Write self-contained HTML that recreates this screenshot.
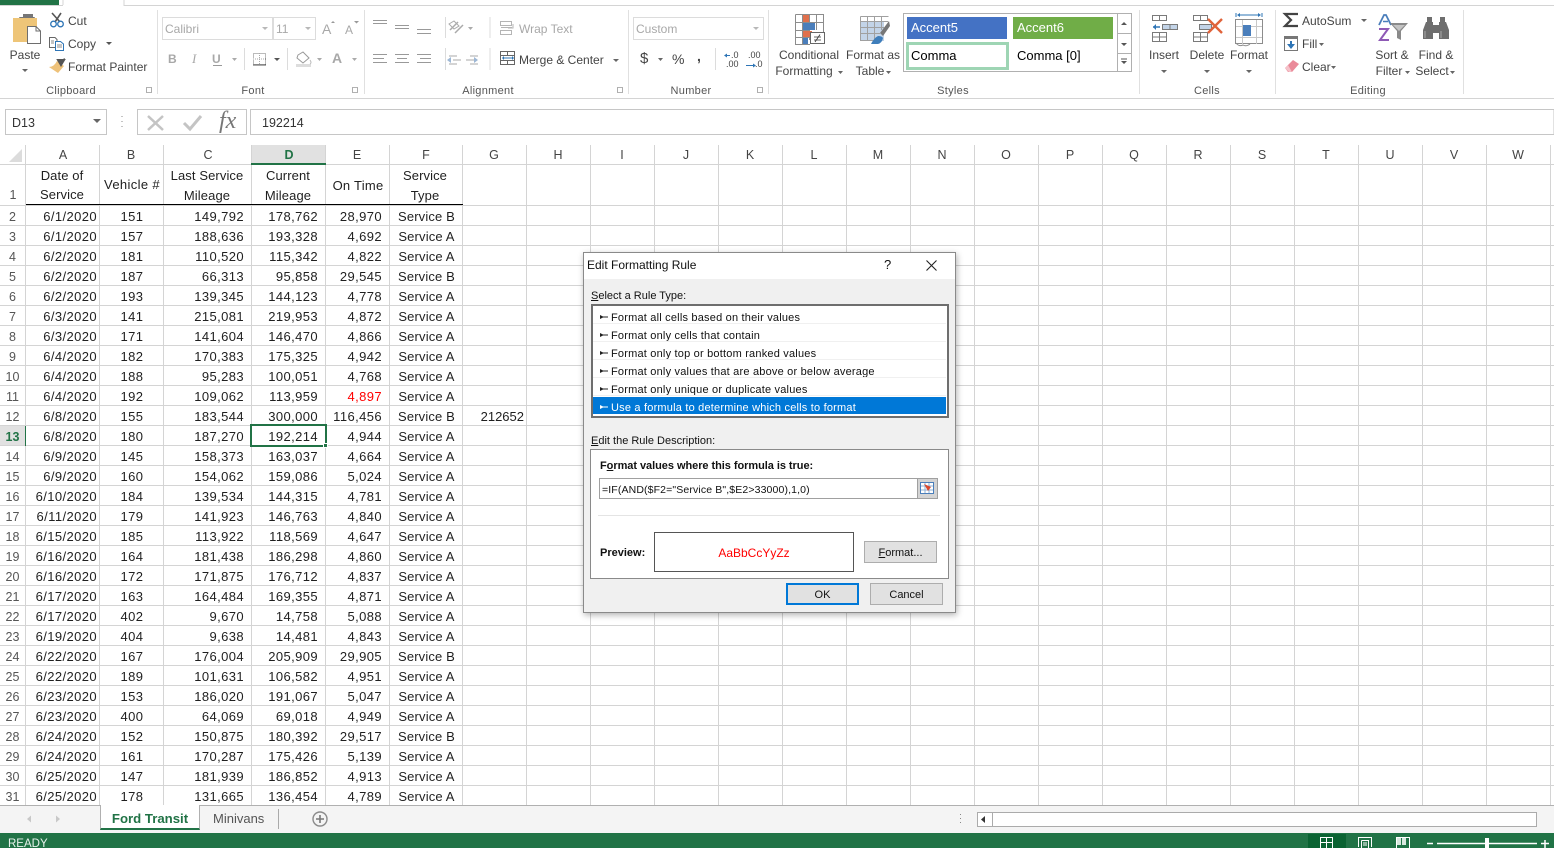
<!DOCTYPE html>
<html><head><meta charset="utf-8"><title>Excel</title>
<style>
html,body{margin:0;padding:0;width:1554px;height:848px;overflow:hidden;background:#fff}
body{position:relative;font-family:"Liberation Sans",sans-serif;color:#333}
svg{position:absolute;left:0;top:0}
.t{position:absolute;white-space:nowrap;font-size:12px;line-height:16px;color:#444}
.c{transform:translateX(-50%)}
.g{color:#a8a8a8}
.b{position:absolute;box-sizing:border-box}
.gl{font-size:11px;color:#555;letter-spacing:.3px;top:83px}
table{position:absolute;left:0;top:207px;border-collapse:collapse;table-layout:fixed;width:527px;font-size:13px;color:#1f1f1f}
td{height:20px;padding:0;line-height:20px;white-space:nowrap;letter-spacing:.4px;overflow:hidden}
td:nth-child(1){text-align:center;color:#555;letter-spacing:0;font-size:12.5px;padding-right:1px}
td:nth-child(2){text-align:right;padding-right:3px}
td:nth-child(3){text-align:center}
td:nth-child(4),td:nth-child(5),td:nth-child(6){text-align:right;padding-right:8px}
td:nth-child(7){text-align:center;letter-spacing:.15px}
td:nth-child(8){text-align:right;padding-right:3px;letter-spacing:0}
.h{position:absolute;white-space:nowrap;font-size:13px;line-height:16px;color:#1f1f1f;transform:translateX(-50%);letter-spacing:.1px}
.ch{position:absolute;top:147px;font-size:12.5px;line-height:16px;color:#444;transform:translateX(-50%)}
#dlg{position:absolute;left:583px;top:252px;width:373px;height:361px;box-sizing:border-box;background:#f0f0f0;border:1px solid #8a8a8a;box-shadow:1px 2px 6px rgba(0,0,0,.3)}
.d{position:absolute;white-space:nowrap;font-size:11px;line-height:14px;color:#111}
.li{position:absolute;left:0;width:353px;height:18px;line-height:24px;font-size:11px;color:#111;border-bottom:1px solid #f0f0f0;box-sizing:border-box;padding-left:18px;letter-spacing:.2px;white-space:nowrap;overflow:hidden}
.btn{position:absolute;box-sizing:border-box;background:#e1e1e1;border:1px solid #adadad;font-size:11px;text-align:center;color:#111;line-height:22px}
u{text-decoration:underline}
</style></head><body>

<svg width="1554" height="848" fill="none">
<!-- header area -->
<rect x="251" y="145" width="75" height="19" fill="#e1e1e1"/>
<rect x="0" y="426" width="25" height="20" fill="#e1e1e1"/>
<path d="M22 149V162H9z" fill="#dcdcdc"/>
<path stroke="#d4d4d4" d="M25.500 145V806M99.500 145V806M163.500 145V806M251.500 145V806M325.500 145V806M389.500 145V806M462.500 145V806M526.500 145V806M590.500 145V806M654.500 145V806M718.500 145V806M782.500 145V806M846.500 145V806M910.500 145V806M974.500 145V806M1038.500 145V806M1102.500 145V806M1166.500 145V806M1230.500 145V806M1294.500 145V806M1358.500 145V806M1422.500 145V806M1486.500 145V806M1550.500 145V806"/>
<path stroke="#d4d4d4" d="M0 164.500H1554M0 205.500H1554M0 225.500H1554M0 245.500H1554M0 265.500H1554M0 285.500H1554M0 305.500H1554M0 325.500H1554M0 345.500H1554M0 365.500H1554M0 385.500H1554M0 405.500H1554M0 425.500H1554M0 445.500H1554M0 465.500H1554M0 485.500H1554M0 505.500H1554M0 525.500H1554M0 545.500H1554M0 565.500H1554M0 585.500H1554M0 605.500H1554M0 625.500H1554M0 645.500H1554M0 665.500H1554M0 685.500H1554M0 705.500H1554M0 725.500H1554M0 745.500H1554M0 765.500H1554M0 785.500H1554"/>
<rect x="251" y="163" width="75" height="2" fill="#217346"/>
<rect x="25" y="426" width="1" height="20" fill="#217346"/>
<path d="M26 204.500H463" stroke="#000"/>
</svg>

<div class="ch" style="left:63px">A</div><div class="ch" style="left:131px">B</div><div class="ch" style="left:208px">C</div><div class="ch" style="left:289px;color:#217346;font-weight:bold">D</div><div class="ch" style="left:357px">E</div><div class="ch" style="left:426px">F</div><div class="ch" style="left:494px">G</div><div class="ch" style="left:558px">H</div><div class="ch" style="left:622px">I</div><div class="ch" style="left:686px">J</div><div class="ch" style="left:750px">K</div><div class="ch" style="left:814px">L</div><div class="ch" style="left:878px">M</div><div class="ch" style="left:942px">N</div><div class="ch" style="left:1006px">O</div><div class="ch" style="left:1070px">P</div><div class="ch" style="left:1134px">Q</div><div class="ch" style="left:1198px">R</div><div class="ch" style="left:1262px">S</div><div class="ch" style="left:1326px">T</div><div class="ch" style="left:1390px">U</div><div class="ch" style="left:1454px">V</div><div class="ch" style="left:1518px">W</div>

<div class="h" style="left:13px;top:187px;color:#555;font-size:12.5px">1</div>
<div class="h" style="left:62px;top:168px">Date of</div><div class="h" style="left:62px;top:187px">Service</div>
<div class="h" style="left:132px;top:177px;letter-spacing:.35px">Vehicle #</div>
<div class="h" style="left:207px;top:168px">Last Service</div><div class="h" style="left:207px;top:188px">Mileage</div>
<div class="h" style="left:288px;top:168px">Current</div><div class="h" style="left:288px;top:188px">Mileage</div>
<div class="h" style="left:358px;top:178px;letter-spacing:.25px">On Time</div>
<div class="h" style="left:425px;top:168px">Service</div><div class="h" style="left:425px;top:188px">Type</div>

<table>
<colgroup><col style="width:26px"><col style="width:74px"><col style="width:64px"><col style="width:88px"><col style="width:74px"><col style="width:64px"><col style="width:73px"><col style="width:64px"></colgroup>
<tr><td>2</td><td>6/1/2020</td><td>151</td><td>149,792</td><td>178,762</td><td>28,970</td><td>Service B</td><td></td></tr>
<tr><td>3</td><td>6/1/2020</td><td>157</td><td>188,636</td><td>193,328</td><td>4,692</td><td>Service A</td><td></td></tr>
<tr><td>4</td><td>6/2/2020</td><td>181</td><td>110,520</td><td>115,342</td><td>4,822</td><td>Service A</td><td></td></tr>
<tr><td>5</td><td>6/2/2020</td><td>187</td><td>66,313</td><td>95,858</td><td>29,545</td><td>Service B</td><td></td></tr>
<tr><td>6</td><td>6/2/2020</td><td>193</td><td>139,345</td><td>144,123</td><td>4,778</td><td>Service A</td><td></td></tr>
<tr><td>7</td><td>6/3/2020</td><td>141</td><td>215,081</td><td>219,953</td><td>4,872</td><td>Service A</td><td></td></tr>
<tr><td>8</td><td>6/3/2020</td><td>171</td><td>141,604</td><td>146,470</td><td>4,866</td><td>Service A</td><td></td></tr>
<tr><td>9</td><td>6/4/2020</td><td>182</td><td>170,383</td><td>175,325</td><td>4,942</td><td>Service A</td><td></td></tr>
<tr><td>10</td><td>6/4/2020</td><td>188</td><td>95,283</td><td>100,051</td><td>4,768</td><td>Service A</td><td></td></tr>
<tr><td>11</td><td>6/4/2020</td><td>192</td><td>109,062</td><td>113,959</td><td style="color:#f00">4,897</td><td>Service A</td><td></td></tr>
<tr><td>12</td><td>6/8/2020</td><td>155</td><td>183,544</td><td>300,000</td><td>116,456</td><td>Service B</td><td>212652</td></tr>
<tr><td style="color:#217346;font-weight:bold">13</td><td>6/8/2020</td><td>180</td><td>187,270</td><td>192,214</td><td>4,944</td><td>Service A</td><td></td></tr>
<tr><td>14</td><td>6/9/2020</td><td>145</td><td>158,373</td><td>163,037</td><td>4,664</td><td>Service A</td><td></td></tr>
<tr><td>15</td><td>6/9/2020</td><td>160</td><td>154,062</td><td>159,086</td><td>5,024</td><td>Service A</td><td></td></tr>
<tr><td>16</td><td>6/10/2020</td><td>184</td><td>139,534</td><td>144,315</td><td>4,781</td><td>Service A</td><td></td></tr>
<tr><td>17</td><td>6/11/2020</td><td>179</td><td>141,923</td><td>146,763</td><td>4,840</td><td>Service A</td><td></td></tr>
<tr><td>18</td><td>6/15/2020</td><td>185</td><td>113,922</td><td>118,569</td><td>4,647</td><td>Service A</td><td></td></tr>
<tr><td>19</td><td>6/16/2020</td><td>164</td><td>181,438</td><td>186,298</td><td>4,860</td><td>Service A</td><td></td></tr>
<tr><td>20</td><td>6/16/2020</td><td>172</td><td>171,875</td><td>176,712</td><td>4,837</td><td>Service A</td><td></td></tr>
<tr><td>21</td><td>6/17/2020</td><td>163</td><td>164,484</td><td>169,355</td><td>4,871</td><td>Service A</td><td></td></tr>
<tr><td>22</td><td>6/17/2020</td><td>402</td><td>9,670</td><td>14,758</td><td>5,088</td><td>Service A</td><td></td></tr>
<tr><td>23</td><td>6/19/2020</td><td>404</td><td>9,638</td><td>14,481</td><td>4,843</td><td>Service A</td><td></td></tr>
<tr><td>24</td><td>6/22/2020</td><td>167</td><td>176,004</td><td>205,909</td><td>29,905</td><td>Service B</td><td></td></tr>
<tr><td>25</td><td>6/22/2020</td><td>189</td><td>101,631</td><td>106,582</td><td>4,951</td><td>Service A</td><td></td></tr>
<tr><td>26</td><td>6/23/2020</td><td>153</td><td>186,020</td><td>191,067</td><td>5,047</td><td>Service A</td><td></td></tr>
<tr><td>27</td><td>6/23/2020</td><td>400</td><td>64,069</td><td>69,018</td><td>4,949</td><td>Service A</td><td></td></tr>
<tr><td>28</td><td>6/24/2020</td><td>152</td><td>150,875</td><td>180,392</td><td>29,517</td><td>Service B</td><td></td></tr>
<tr><td>29</td><td>6/24/2020</td><td>161</td><td>170,287</td><td>175,426</td><td>5,139</td><td>Service A</td><td></td></tr>
<tr><td>30</td><td>6/25/2020</td><td>147</td><td>181,939</td><td>186,852</td><td>4,913</td><td>Service A</td><td></td></tr>
<tr><td>31</td><td>6/25/2020</td><td>178</td><td>131,665</td><td>136,454</td><td>4,789</td><td>Service A</td><td></td></tr>
</table>

<div class="b" style="left:250px;top:424px;width:77px;height:23px;border:2px solid #217346"></div>
<div class="b" style="left:323px;top:443px;width:5px;height:5px;background:#217346;border:1px solid #fff"></div>

<!-- bottom bars -->
<div class="b" style="left:0;top:805px;width:1554px;height:28px;background:#f4f4f4;border-top:1px solid #b0b0b0"></div>
<div class="b" style="left:100px;top:805px;width:100px;height:25px;background:#fff;border-left:1px solid #b0b0b0;border-right:1px solid #b0b0b0;border-bottom:2px solid #217346"></div>
<div class="t" style="left:150px;top:811px;font-size:13.2px;font-weight:bold;color:#217346;transform:translateX(-50%)">Ford Transit</div>
<div class="t" style="left:213px;top:811px;font-size:13px;color:#555">Minivans</div>
<div class="b" style="left:977px;top:812px;width:560px;height:15px;background:#fff;border:1px solid #ababab"></div>
<div class="b" style="left:0;top:833px;width:1554px;height:15px;background:#217346;overflow:hidden"><div class="t" style="left:8px;top:4px;font-size:11.5px;color:#e8f2ec;line-height:15px">READY</div></div>
<div class="b" style="left:1308px;top:834px;width:38px;height:14px;background:#0a6332"></div>

<!-- ribbon background -->
<div class="b" style="left:0;top:0;width:1554px;height:145px;z-index:0"></div>
<svg width="1554" height="848" fill="none">
<rect x="0" y="0" width="59" height="6" fill="#217346"/>
<path d="M0 5.500H63M124 0V5.500H1554" stroke="#d4d4d4"/>
<path d="M63 0V5" stroke="#d4d4d4"/>
<path d="M0 98.500H1554" stroke="#d4d4d4"/>
<path stroke="#e0e0e0" d="M157.500 10V94M364.500 10V94M628.500 10V94M768.500 10V94M1139.500 10V94M1275.500 10V94M1463.500 10V94"/>
<path stroke="#dcdcdc" d="M597 6M445.500 17V38M445.500 48V70M490 17V38M490 48V70M244.500 48V70M287.500 48V70M715.500 48V70"/>

<!-- paste -->
<rect x="23" y="14" width="10" height="4" fill="#767676"/><rect x="19" y="17" width="16" height="4" rx="1" fill="#767676"/>
<path d="M13 18H37V42H13z" fill="#eec578"/>
<path d="M27.500 26.500H36L40.500 31V43.500H27.500z" fill="#fff" stroke="#6e6e6e"/>
<path d="M36 26.500V31H40.500" stroke="#6e6e6e"/>
<!-- cut -->
<path d="M52 13L60 22M61 13L55 22" stroke="#555" stroke-width="1.600"/>
<circle cx="53.500" cy="24" r="2.800" stroke="#2e75b6" stroke-width="1.300"/><circle cx="60.500" cy="24" r="2.800" stroke="#2e75b6" stroke-width="1.300"/>
<!-- copy -->
<path d="M49.500 37.500H55L57 39.500V47.500H49.500z" fill="#fff" stroke="#666"/>
<path d="M55.500 41.500H60.500L63.500 44V50.500H55.500z" fill="#fff" stroke="#2e75b6"/>
<path d="M57 45H62M57 47H62M51 41H54M51 43H54" stroke="#666" stroke-width=".8"/>
<path d="M106 42h6l-3 3z" fill="#555"/>
<!-- painter -->
<path d="M57 61L64 66L58 73L49 67Q54 67 57 61z" fill="#eec27a"/><path d="M58 60L64 60L61 65z M60 62L65 59" fill="#555" stroke="#555" stroke-width="2"/>
<path d="M22 69h6l-3 3z" fill="#666"/>

<!-- font boxes -->
<rect x="162.500" y="17.500" width="110" height="22" fill="#fff" stroke="#dcdcdc"/><rect x="273.500" y="17.500" width="42" height="22" fill="#fff" stroke="#dcdcdc"/>
<path d="M262 27h6l-3 3zM305 27h6l-3 3z" fill="#b8b8b8"/>
<path d="M331 23l2-2 2 2zM354 21h5l-2.500 2.500z" fill="#999"/>
<path d="M232 58h5l-2.500 3zM317 58h5l-2.500 3zM352 58h5l-2.500 3z" fill="#aaa"/>
<path d="M274 58h6l-3 3z" fill="#555"/>
<rect x="253.500" y="53.500" width="12" height="11" stroke="#777" stroke-dasharray="1 1"/><path d="M253 65H266" stroke="#555"/><path d="M259.500 53V65M253 59H266" stroke="#aaa" stroke-dasharray="1 1"/>
<path d="M298 55L303 52L309 58L303 63L297 58z" fill="#fff" stroke="#999"/><rect x="296" y="64" width="15" height="3" fill="#ddd"/><path d="M310 60q2 3 0 4" stroke="#bbb"/>
<path d="M213 65.500H222" stroke="#999"/>
<!-- alignment -->
<path stroke="#999" d="M373 20.500H387M373 23.500H387M395 25.500H409M395 28.500H409M417 29.500H431M417 33.500H431"/>
<path stroke="#999" d="M373 54.500H387M373 58.500H384M373 62.500H387M395 54.500H409M397 58.500H407M395 62.500H409M417 54.500H431M420 58.500H431M417 62.500H431"/>
<path stroke="#aaa" d="M449 56h8M453 60h8M449 64h8M470 56h8M466 60h8M470 64h8"/>
<path d="M447 60l4-3v6zM478 60l-4-3v6z" fill="#9db7d5"/>
<path d="M450 30l8-8M455 33l8-8" stroke="#aaa" stroke-width="1.500"/><path d="M449 24l5-3 5 5-5 3z" stroke="#aaa"/><path d="M468 27h5l-2.500 3z" fill="#aaa"/>
<rect x="500.500" y="21.500" width="11" height="4" stroke="#b5b5b5"/><rect x="500.500" y="30.500" width="11" height="4" stroke="#b5b5b5"/><path d="M501 27.500H512M513 24V28H508" stroke="#b5b5b5"/>
<rect x="500.500" y="51.500" width="14" height="13" stroke="#666"/><path d="M501 55.500H514M501 60.500H514M507.500 52V55M507.500 61V64" stroke="#666"/><path d="M503 58H513" stroke="#2e75b6"/><path d="M502 58l2-2v4zM514 58l-2-2v4z" fill="#2e75b6"/>
<path d="M613 59h6l-3 3z" fill="#666"/>
<!-- number -->
<rect x="633.500" y="17.500" width="130" height="22" fill="#fff" stroke="#dcdcdc"/>
<path d="M753 27h6l-3 3z" fill="#b8b8b8"/><path d="M658 58h5l-2.500 3z" fill="#666"/>
<path d="M725 55.500h5M746 65.500h8" stroke="#2e75b6"/><path d="M724 55.500l3-2v4zM756 65.500l-3-2v4z" fill="#2e75b6"/>
<!-- conditional formatting -->
<rect x="796" y="14" width="27" height="26" fill="#fff"/>
<path d="M795.500 14.500H823.500V40M795.500 14.500V44.500H810M795.500 22.500H823.500M795.500 30.500H810M795.500 37.500H810M802.500 14.500V44M809.500 14.500V40M816.500 14.500V30" stroke="#8c8c8c"/>
<rect x="803" y="15" width="6" height="7" fill="#e0704c"/><rect x="803" y="23" width="12" height="7" fill="#4a7ebb"/><rect x="803" y="31" width="9" height="6" fill="#e0704c"/><rect x="803" y="38" width="5" height="6" fill="#4a7ebb"/>
<rect x="810.500" y="32.500" width="14" height="11" fill="#fff" stroke="#666"/><path d="M814 37H821M814 40H821M820 34.500L815 42" stroke="#333" stroke-width=".8"/>
<!-- format as table -->
<rect x="860" y="21" width="24" height="20" fill="#c3d4e8"/>
<path d="M860.500 16.500H888.500M860.500 16.500V40.500H880M860.500 21.500H888M860.500 27.500H884M860.500 33.500H880M867.500 16.500V41M874.500 16.500V41M881.500 16.500V30" stroke="#a0a0a0"/>
<path d="M889 21L880 33L883 36L890 26z" fill="#777"/>
<path d="M871 44Q874 38 878 36Q882 36 883 38Q882 43 878 44z" fill="#3f7ebb"/>
<!-- gallery -->
<rect x="903.500" y="13.500" width="228" height="58" fill="#fff" stroke="#b0b0b0"/>
<rect x="907" y="17" width="100" height="22" fill="#4472c4"/>
<rect x="1013" y="17" width="100" height="22" fill="#70ad47"/>
<rect x="907.500" y="43.500" width="100" height="25" fill="#fff" stroke="#9ed5b4" stroke-width="3"/>
<path d="M1117.500 13V72M1117.500 33.500H1131M1117.500 53.500H1131" stroke="#b0b0b0"/>
<path d="M1121 25l3-3 3 3zM1121 43h6l-3 3zM1121 61h6l-3 3z" fill="#555"/><path d="M1121 59H1127" stroke="#555"/>
<!-- insert -->
<path stroke="#7a7a7a" d="M1152.500 15.500H1166.500V20.500H1152.500zM1159.500 15.500V20.500M1152.500 32.500H1166.500V41.500H1152.500zM1159.500 32.500V41.500M1152.500 37H1166.500"/>
<rect x="1162.500" y="24.500" width="15" height="5" fill="#c3d4e8" stroke="#7a7a7a"/><path d="M1170 24.500V29.500" stroke="#7a7a7a"/>
<path d="M1153 27H1160" stroke="#2e75b6" stroke-width="1.500"/><path d="M1153 27l3-3v6z" fill="#2e75b6"/>
<!-- delete -->
<path stroke="#7a7a7a" d="M1193.500 15.500H1207.500V20.500H1193.500zM1200.500 15.500V20.500M1193.500 32.500H1207.500V41.500H1193.500zM1200.500 32.500V41.500M1193.500 37H1207.500"/>
<rect x="1199.500" y="24.500" width="12" height="5" fill="#c3d4e8" stroke="#7a7a7a"/>
<path d="M1208 19L1222 33M1222 19L1208 33" stroke="#e0633a" stroke-width="2.400"/>
<!-- format -->
<path d="M1236 13V17M1262 13V17M1238 15H1260" stroke="#2e75b6"/><path d="M1237 15l3-2v4zM1261 15l-3-2v4z" fill="#2e75b6"/>
<rect x="1235.500" y="19.500" width="27" height="24" fill="#fff" stroke="#8c8c8c"/>
<path d="M1242.500 20V44M1256.500 20V44M1236 26.500H1262M1236 37.500H1262" stroke="#c8c8c8"/>
<rect x="1243" y="25" width="8" height="11" fill="#4a7ebb"/>
<path d="M1236 43q3 4 7 2q3 2 7-1" stroke="#8c8c8c"/>
<path d="M1161 70h6l-3 3zM1204 70h6l-3 3zM1246 70h6l-3 3z" fill="#666"/>
<!-- sigma -->
<path d="M1298 14H1285L1291 20L1285 26H1298" stroke="#444" stroke-width="2.200"/>
<path d="M1361 19h6l-3 3z" fill="#666"/>
<rect x="1284.500" y="36.500" width="13" height="14" fill="#fff" stroke="#777"/><rect x="1284" y="36" width="14" height="3" fill="#777"/>
<path d="M1291 41V48" stroke="#2e75b6" stroke-width="2"/><path d="M1287 44l4 5 4-5z" fill="#2e75b6"/>
<path d="M1319 43h5l-2.500 3zM1331 66h5l-2.500 3z" fill="#666"/>
<path d="M1285 68L1293 60L1299 64L1292 72H1288z" fill="#ea8a99"/><path d="M1285 68L1289 72H1292L1288 65z" fill="#f5c2ca"/>
<!-- sort -->
<path d="M1383 21.500H1388" stroke="#4a7ebb" stroke-width="1.500"/>
<path d="M1379 29H1388L1380 40H1389" stroke="#8e5ab5" stroke-width="2"/>
<path d="M1379 25L1384 15H1386L1391 25" stroke="#4a7ebb" stroke-width="1.800"/>
<path d="M1390 23H1408L1401 31V40L1397 38V31z" fill="#8a8a8a"/><path d="M1393 25H1405L1399 31z" fill="#c4c4c4"/>
<!-- binoculars -->
<path d="M1427 17h5v6h-5zM1440 17h5v6h-5z" fill="#6e6e6e"/>
<path d="M1426 22H1433V39H1423V30zM1439 22H1446L1449 30V39H1439zM1433 25H1439V33H1433z" fill="#6e6e6e"/>
<path d="M1425 31V38M1441 31V38" stroke="#aaa"/>
<path d="M1405 71h5l-2.500 3zM1450 71h5l-2.500 3z" fill="#666"/>
<path d="M838 71h5l-2.500 3zM886 71h5l-2.500 3z" fill="#666"/>
<!-- launchers -->
<path stroke="#999" d="M146.500 87.500h5v5h-5zM352.500 87.500h5v5h-5zM617.500 87.500h5v5h-5zM757.500 87.500h5v5h-5z" stroke-width=".8"/>
<!-- formula bar -->
<rect x="5.500" y="109.500" width="101" height="25" fill="#fff" stroke="#c6c6c6"/>
<path d="M93 119h8l-4 4z" fill="#666"/>
<path d="M122 116v1M122 121v1M122 126v1" stroke="#888"/>
<rect x="137.500" y="109.500" width="109" height="25" fill="#fff" stroke="#c6c6c6"/>
<path d="M148 116L163 130M163 116L148 130" stroke="#c4c4c4" stroke-width="2.500"/>
<path d="M184 123L190 129L201 116" stroke="#c4c4c4" stroke-width="3"/>
<path d="M250.500 109.500H1554V134.500H250.500z" fill="#fff" stroke="#c6c6c6"/>
<!-- sheet nav -->
<path d="M27 819l4-3.500v7zM60 819l-4-3.500v7z" fill="#c8c8c8"/>
<path d="M278.500 809V829" stroke="#aaa"/>
<circle cx="320" cy="819" r="7" stroke="#8a8a8a" stroke-width="1.400"/><path d="M316 819H324M320 815V823" stroke="#777" stroke-width="1.600"/>
<path d="M960.500 814v1M960.500 818v1M960.500 822v1" stroke="#888"/>
<path d="M992.500 812V827" stroke="#ababab"/><path d="M981 819.500l4-3.500v7z" fill="#333"/>
<!-- status icons -->
<path stroke="#fff" d="M1320.500 837V848M1326.500 837V848M1332.500 837V848M1320 837.500H1333M1320 842.500H1333"/>
<path stroke="#fff" d="M1358.500 847V837.500H1371.500V847M1361.500 840.500H1368.500V848M1361.500 840.500V848M1363 843H1367M1363 845H1367"/>
<path stroke="#fff" d="M1396.500 848V837.500H1409.500V848"/><rect x="1397" y="838" width="4" height="7" fill="#d9e8df"/><rect x="1402" y="838" width="4" height="7" fill="#d9e8df"/>
<path d="M1427 843.500H1433M1437 843.500H1537M1541 843.500H1549M1545 840V848" stroke="#fff" stroke-width="1.500"/>
<rect x="1485" y="838" width="4" height="10" fill="#fff"/>
</svg>

<div class="t" style="left:68px;top:13px">Cut</div>
<div class="t" style="left:68px;top:36px">Copy</div>
<div class="t" style="left:68px;top:59px">Format Painter</div>
<div class="t c" style="left:25px;top:47px">Paste</div>
<div class="t c gl" style="left:71px">Clipboard</div>
<div class="t c gl" style="left:253px">Font</div>
<div class="t c gl" style="left:488px">Alignment</div>
<div class="t c gl" style="left:691px">Number</div>
<div class="t c gl" style="left:953px">Styles</div>
<div class="t c gl" style="left:1207px">Cells</div>
<div class="t c gl" style="left:1368px">Editing</div>
<div class="t g" style="left:165px;top:21px">Calibri</div>
<div class="t g" style="left:276px;top:21px">11</div>
<div class="t g" style="left:322px;top:21px;font-size:14px">A</div>
<div class="t g" style="left:345px;top:22px;font-size:12px">A</div>
<div class="t g" style="left:168px;top:51px;font-weight:bold">B</div>
<div class="t g" style="left:192px;top:51px;font-style:italic;font-family:'Liberation Serif',serif;font-size:13px">I</div>
<div class="t g" style="left:212px;top:51px;font-weight:bold">U</div>
<div class="t g" style="left:332px;top:50px;font-size:14px;font-weight:bold">A</div>
<div class="t g" style="left:519px;top:21px">Wrap Text</div>
<div class="t" style="left:519px;top:52px">Merge &amp; Center</div>
<div class="t g" style="left:636px;top:21px">Custom</div>
<div class="t" style="left:640px;top:50px;font-size:15px;line-height:18px">$</div>
<div class="t" style="left:672px;top:51px;font-size:14px">%</div>
<div class="t" style="left:697px;top:48px;font-size:14px;font-weight:bold">,</div>
<div class="t" style="left:731px;top:51px;font-size:9px;line-height:9px">.0</div>
<div class="t" style="left:726px;top:60px;font-size:9px;line-height:9px">.00</div>
<div class="t" style="left:748px;top:51px;font-size:9px;line-height:9px">.00</div>
<div class="t" style="left:755px;top:60px;font-size:9px;line-height:9px">.0</div>
<div class="t c" style="left:809px;top:47px">Conditional</div>
<div class="t c" style="left:804px;top:63px">Formatting</div>
<div class="t c" style="left:873px;top:47px">Format as</div>
<div class="t c" style="left:870px;top:63px">Table</div>
<div class="t" style="left:911px;top:20px;color:#fff;font-size:13px">Accent5</div>
<div class="t" style="left:1017px;top:20px;color:#fff;font-size:13px">Accent6</div>
<div class="t" style="left:911px;top:48px;color:#000;font-size:13px">Comma</div>
<div class="t" style="left:1017px;top:48px;color:#000;font-size:13px">Comma [0]</div>
<div class="t c" style="left:1164px;top:47px">Insert</div>
<div class="t c" style="left:1207px;top:47px">Delete</div>
<div class="t c" style="left:1249px;top:47px">Format</div>
<div class="t" style="left:1302px;top:13px">AutoSum</div>
<div class="t" style="left:1302px;top:36px">Fill</div>
<div class="t" style="left:1302px;top:59px">Clear</div>
<div class="t c" style="left:1392px;top:47px">Sort &amp;</div>
<div class="t c" style="left:1389px;top:63px">Filter</div>
<div class="t c" style="left:1436px;top:47px">Find &amp;</div>
<div class="t c" style="left:1432px;top:63px">Select</div>
<div class="t" style="left:12px;top:115px;font-size:12.500px;color:#333">D13</div>
<div class="t" style="left:262px;top:115px;font-size:12.500px;color:#333">192214</div>
<div class="t" style="left:219px;top:109px;font:italic 24px/24px 'Liberation Serif',serif;color:#777">fx</div>

<!-- dialog -->
<div id="dlg">
<div class="b" style="left:0;top:0;width:371px;height:26px;background:#fff"></div>
<div class="d" style="left:3px;top:4px;font-size:12px;line-height:16px">Edit Formatting Rule</div>
<div class="d" style="left:300px;top:4px;font-size:13px;line-height:16px">?</div>
<svg style="left:341px;top:6px" width="14" height="14"><path d="M1.500 1.500L11.500 11.500M11.500 1.500L1.500 11.500" stroke="#222" stroke-width="1.100" fill="none"/></svg>
<div class="d" style="left:7px;top:36px"><u>S</u>elect a Rule Type:</div>
<div class="b" style="left:7px;top:51px;width:358px;height:114px;background:#fff;border:2px solid #6e6e6e">
<div class="li" style="top:0">Format all cells based on their values</div>
<div class="li" style="top:18px">Format only cells that contain</div>
<div class="li" style="top:36px">Format only top or bottom ranked values</div>
<div class="li" style="top:54px">Format only values that are above or below average</div>
<div class="li" style="top:72px">Format only unique or duplicate values</div>
<div class="li" style="top:91px;height:17px;line-height:22px;background:#0078d7;color:#fff;border:0">Use a formula to determine which cells to format</div>
<svg width="354" height="110" style="left:0;top:0"><path d="M7 11h8M7 29h8M7 47h8M7 65h8M7 83h8" stroke="#222"/><path d="M7 9v4l4-2zM7 27v4l4-2zM7 45v4l4-2zM7 63v4l4-2zM7 81v4l4-2z" fill="#222"/><path d="M7 101h8" stroke="#fff"/><path d="M7 99v4l4-2z" fill="#fff"/></svg>
</div>
<div class="d" style="left:7px;top:181px"><u>E</u>dit the Rule Description:</div>
<div class="b" style="left:6px;top:196px;width:359px;height:130px;background:#fff;border:1px solid #8a8a8a"></div>
<div class="d" style="left:16px;top:206px;font-weight:bold;letter-spacing:-.05px">F<u>o</u>rmat values where this formula is true:</div>
<div class="b" style="left:15px;top:225px;width:339px;height:21px;background:#fff;border:1px solid #a0a0a0"></div>
<div class="d" style="left:18px;top:230px;font-size:10.500px;letter-spacing:.13px">=IF(AND($F2="Service B",$E2&gt;33000),1,0)</div>
<div class="b" style="left:333px;top:225px;width:21px;height:21px;background:#d4d4d4;border:1px solid #a0a0a0"></div>
<svg style="left:335px;top:228px" width="17" height="15"><rect x="1.500" y="1.500" width="13" height="11" fill="#fff" stroke="#4a7ebb"/><path d="M2 5H14M2 9H14M6 2V12M10 2V12" stroke="#8fb0d3"/><path d="M5 3L12 6L9 10z" fill="#d9482e"/></svg>
<div class="b" style="left:14px;top:262px;width:342px;height:1px;background:#e4e4e4"></div>
<div class="d" style="left:16px;top:293px;font-weight:bold">Preview:</div>
<div class="b" style="left:70px;top:279px;width:200px;height:40px;background:#fff;border:1px solid #555"></div>
<div class="d" style="left:170px;top:293px;color:#f00;font-size:12px;transform:translateX(-50%)">AaBbCcYyZz</div>
<div class="btn" style="left:280px;top:288px;width:73px;height:22px"><u>F</u>ormat...</div>
<div class="btn" style="left:202px;top:330px;width:73px;height:22px;border:2px solid #0078d7;line-height:20px">OK</div>
<div class="btn" style="left:286px;top:330px;width:73px;height:22px">Cancel</div>
</div>
</body></html>
